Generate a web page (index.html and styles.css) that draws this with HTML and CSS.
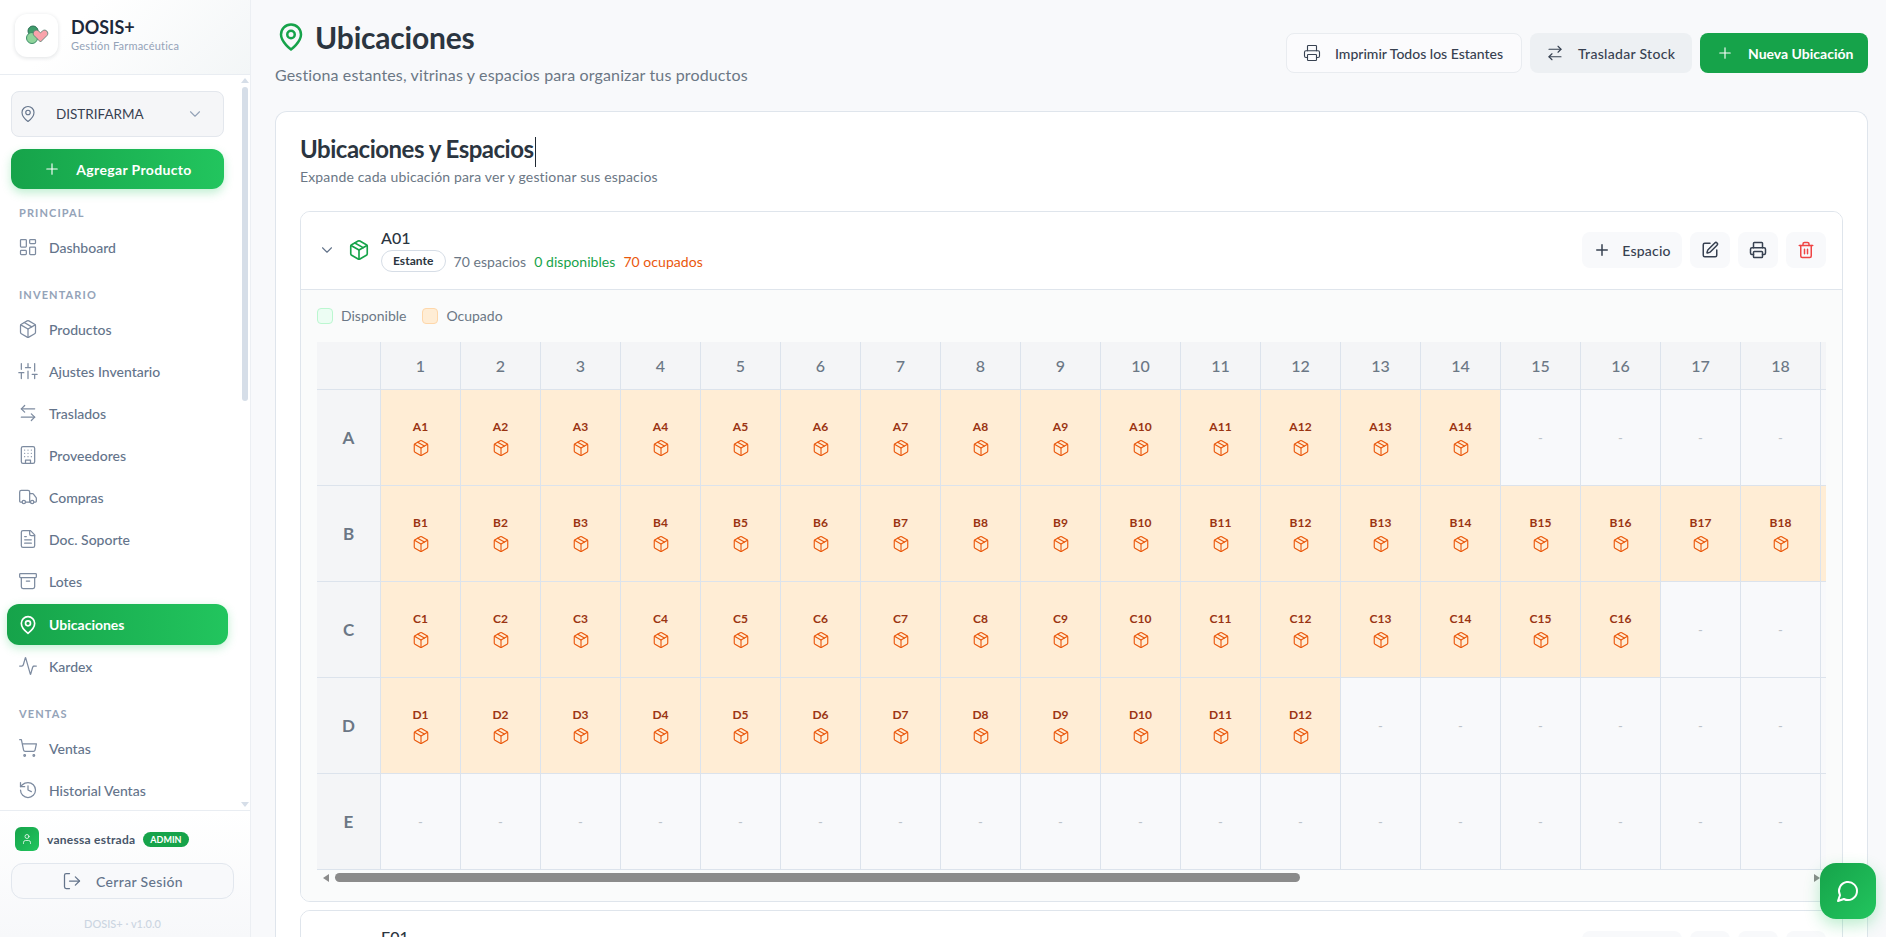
FILE: index.html
```html
<!DOCTYPE html>
<html lang="es">
<head>
  <title>Ubicaciones — DOSIS+</title>
  <meta charset="UTF-8">
  <link rel="stylesheet" href="styles.css">
</head>
<body>
<svg class="sprite" xmlns="http://www.w3.org/2000/svg">
  <symbol id="i-pin" viewBox="0 0 24 24"><path d="M20 10c0 6-8 12-8 12s-8-6-8-12a8 8 0 0 1 16 0Z"/><circle cx="12" cy="10" r="3"/></symbol>
  <symbol id="i-chevron" viewBox="0 0 24 24"><path d="m6 9 6 6 6-6"/></symbol>
  <symbol id="i-plus" viewBox="0 0 24 24"><path d="M5 12h14M12 5v14"/></symbol>
  <symbol id="i-dashboard" viewBox="0 0 24 24"><rect x="3" y="3" width="7" height="9" rx="1"/><rect x="14" y="3" width="7" height="5" rx="1"/><rect x="14" y="12" width="7" height="9" rx="1"/><rect x="3" y="16" width="7" height="5" rx="1"/></symbol>
  <symbol id="i-package" viewBox="0 0 24 24"><path d="m7.5 4.27 9 5.15"/><path d="M21 8a2 2 0 0 0-1-1.73l-7-4a2 2 0 0 0-2 0l-7 4A2 2 0 0 0 3 8v8a2 2 0 0 0 1 1.73l7 4a2 2 0 0 0 2 0l7-4A2 2 0 0 0 21 16Z"/><path d="m3.3 7 8.7 5 8.7-5"/><path d="M12 22V12"/></symbol>
  <symbol id="i-sliders" viewBox="0 0 24 24"><path d="M4 21v-7M4 10V3M12 21v-9M12 8V3M20 21v-5M20 12V3M1 14h6M9 8h6M17 16h6"/></symbol>
  <symbol id="i-left-right" viewBox="0 0 24 24"><path d="M8 3 4 7l4 4"/><path d="M4 7h16"/><path d="m16 21 4-4-4-4"/><path d="M20 17H4"/></symbol>
  <symbol id="i-right-left" viewBox="0 0 24 24"><path d="m16 3 4 4-4 4"/><path d="M20 7H4"/><path d="m8 21-4-4 4-4"/><path d="M4 17h16"/></symbol>
  <symbol id="i-building" viewBox="0 0 24 24"><rect x="4" y="2" width="16" height="20" rx="2"/><path d="M9 22v-4h6v4"/><path d="M8 6h.01M16 6h.01M12 6h.01M12 10h.01M12 14h.01M16 10h.01M16 14h.01M8 10h.01M8 14h.01"/></symbol>
  <symbol id="i-truck" viewBox="0 0 24 24"><path d="M14 18V6a2 2 0 0 0-2-2H4a2 2 0 0 0-2 2v11a1 1 0 0 0 1 1h2"/><path d="M15 18H9"/><path d="M19 18h2a1 1 0 0 0 1-1v-3.65a1 1 0 0 0-.22-.624l-3.48-4.35A1 1 0 0 0 17.52 8H14"/><circle cx="17" cy="18" r="2"/><circle cx="7" cy="18" r="2"/></symbol>
  <symbol id="i-file" viewBox="0 0 24 24"><path d="M15 2H6a2 2 0 0 0-2 2v16a2 2 0 0 0 2 2h12a2 2 0 0 0 2-2V7Z"/><path d="M14 2v4a2 2 0 0 0 2 2h4"/><path d="M10 9H8M16 13H8M16 17H8"/></symbol>
  <symbol id="i-archive" viewBox="0 0 24 24"><rect x="2" y="3" width="20" height="5" rx="1"/><path d="M4 8v11a2 2 0 0 0 2 2h12a2 2 0 0 0 2-2V8"/><path d="M10 12h4"/></symbol>
  <symbol id="i-activity" viewBox="0 0 24 24"><path d="M22 12h-2.48a2 2 0 0 0-1.93 1.46l-2.35 8.36a.25.25 0 0 1-.48 0L9.24 2.18a.25.25 0 0 0-.48 0l-2.35 8.36A2 2 0 0 1 4.49 12H2"/></symbol>
  <symbol id="i-cart" viewBox="0 0 24 24"><circle cx="8" cy="21" r="1"/><circle cx="19" cy="21" r="1"/><path d="M2.05 2.05h2l2.66 12.42a2 2 0 0 0 2 1.58h9.78a2 2 0 0 0 1.95-1.57l1.65-7.43H5.12"/></symbol>
  <symbol id="i-history" viewBox="0 0 24 24"><path d="M3 12a9 9 0 1 0 9-9 9.75 9.75 0 0 0-6.74 2.74L3 8"/><path d="M3 3v5h5"/><path d="M12 7v5l4 2"/></symbol>
  <symbol id="i-user" viewBox="0 0 24 24"><path d="M19 21v-2a4 4 0 0 0-4-4H9a4 4 0 0 0-4 4v2"/><circle cx="12" cy="7" r="4"/></symbol>
  <symbol id="i-logout" viewBox="0 0 24 24"><path d="M9 21H5a2 2 0 0 1-2-2V5a2 2 0 0 1 2-2h4"/><path d="m16 17 5-5-5-5"/><path d="M21 12H9"/></symbol>
  <symbol id="i-printer" viewBox="0 0 24 24"><path d="M6 18H4a2 2 0 0 1-2-2v-5a2 2 0 0 1 2-2h16a2 2 0 0 1 2 2v5a2 2 0 0 1-2 2h-2"/><path d="M6 9V3a1 1 0 0 1 1-1h10a1 1 0 0 1 1 1v6"/><rect x="6" y="14" width="12" height="8" rx="1"/></symbol>
  <symbol id="i-edit" viewBox="0 0 24 24"><path d="M12 3H5a2 2 0 0 0-2 2v14a2 2 0 0 0 2 2h14a2 2 0 0 0 2-2v-7"/><path d="M18.375 2.625a1 1 0 0 1 3 3l-9.013 9.014a2 2 0 0 1-.853.505l-2.873.84a.5.5 0 0 1-.62-.62l.84-2.873a2 2 0 0 1 .506-.852z"/></symbol>
  <symbol id="i-trash" viewBox="0 0 24 24"><path d="M3 6h18"/><path d="M19 6v14c0 1-1 2-2 2H7c-1 0-2-1-2-2V6"/><path d="M8 6V4c0-1 1-2 2-2h4c1 0 2 1 2 2v2"/><path d="M10 11v6M14 11v6"/></symbol>
  <symbol id="i-chat" viewBox="0 0 24 24"><path d="M7.9 20A9 9 0 1 0 4 16.1L2 22Z"/></symbol>
</svg>

<aside class="sidebar">
  <div class="brand">
    <div class="brand-logo">
      <svg width="26" height="26" viewBox="0 0 26 26">
        <circle cx="9" cy="9" r="5" fill="#3f9d6b" stroke="#2d6f55"/>
        <circle cx="8" cy="16" r="5.5" fill="#8fd49a" stroke="#3f8f6b"/>
        <path d="M16.5 20 10 13.5c-2.6-3 1.6-7.2 4.4-4.6l2.1 1.8 2.1-1.8c2.8-2.6 7 1.6 4.4 4.6Z" fill="#f9a3ab" stroke="#4b7a6c" stroke-width=".8"/>
      </svg>
    </div>
    <div>
      <div class="brand-name">DOSIS+</div>
      <div class="brand-sub">Gestión Farmacéutica</div>
    </div>
  </div>

  <nav class="nav">
    <div class="branch">
      <svg class="icon branch-pin"><use href="#i-pin"/></svg>
      <span class="branch-name">DISTRIFARMA</span>
      <svg class="icon branch-chevron"><use href="#i-chevron"/></svg>
    </div>
    <a class="add-product"><svg class="icon"><use href="#i-plus"/></svg>Agregar Producto</a>

    <div class="nav-label first">PRINCIPAL</div>
    <a class="nav-item"><svg class="icon"><use href="#i-dashboard"/></svg>Dashboard</a>

    <div class="nav-label">INVENTARIO</div>
    <a class="nav-item"><svg class="icon"><use href="#i-package"/></svg>Productos</a>
    <a class="nav-item"><svg class="icon"><use href="#i-sliders"/></svg>Ajustes Inventario</a>
    <a class="nav-item"><svg class="icon"><use href="#i-left-right"/></svg>Traslados</a>
    <a class="nav-item"><svg class="icon"><use href="#i-building"/></svg>Proveedores</a>
    <a class="nav-item"><svg class="icon"><use href="#i-truck"/></svg>Compras</a>
    <a class="nav-item"><svg class="icon"><use href="#i-file"/></svg>Doc. Soporte</a>
    <a class="nav-item"><svg class="icon"><use href="#i-archive"/></svg>Lotes</a>
    <a class="nav-item active"><svg class="icon"><use href="#i-pin"/></svg>Ubicaciones</a>
    <a class="nav-item"><svg class="icon"><use href="#i-activity"/></svg>Kardex</a>

    <div class="nav-label">VENTAS</div>
    <a class="nav-item"><svg class="icon"><use href="#i-cart"/></svg>Ventas</a>
    <a class="nav-item"><svg class="icon"><use href="#i-history"/></svg>Historial Ventas</a>

    <div class="side-scroll">
      <i class="arrow arrow-up"></i>
      <i class="side-thumb"></i>
      <i class="arrow arrow-down"></i>
    </div>
  </nav>

  <div class="side-footer">
    <div class="user">
      <span class="avatar"><svg class="icon"><use href="#i-user"/></svg></span>
      <span class="user-name">vanessa estrada</span>
      <span class="role">ADMIN</span>
    </div>
    <a class="logout"><svg class="icon"><use href="#i-logout"/></svg>Cerrar Sesión</a>
    <div class="version">DOSIS+ · v1.0.0</div>
  </div>
</aside>

<main class="main">
  <header class="page-head">
    <div>
      <h1 class="page-title"><svg class="icon"><use href="#i-pin"/></svg>Ubicaciones</h1>
      <p class="page-sub">Gestiona estantes, vitrinas y espacios para organizar tus productos</p>
    </div>
    <div class="page-actions">
      <a class="btn btn-outline"><svg class="icon"><use href="#i-printer"/></svg>Imprimir Todos los Estantes</a>
      <a class="btn btn-grey"><svg class="icon"><use href="#i-right-left"/></svg>Trasladar Stock</a>
      <a class="btn btn-green"><svg class="icon"><use href="#i-plus"/></svg>Nueva Ubicación</a>
    </div>
  </header>

  <section class="card">
    <h2 class="card-title">Ubicaciones y Espacios<span class="caret"></span></h2>
    <p class="card-sub">Expande cada ubicación para ver y gestionar sus espacios</p>

    <div class="shelf">
      <div class="shelf-head">
        <svg class="icon shelf-chevron"><use href="#i-chevron"/></svg>
        <svg class="icon shelf-box"><use href="#i-package"/></svg>
        <div class="shelf-info">
          <div class="shelf-name">A01</div>
          <div class="shelf-meta">
            <span class="tag">Estante</span>
            <span>70 espacios</span>
            <span class="free">0 disponibles</span>
            <span class="taken">70 ocupados</span>
          </div>
        </div>
        <div class="shelf-actions">
          <a class="tool tool-wide"><svg class="icon"><use href="#i-plus"/></svg>Espacio</a>
          <a class="tool"><svg class="icon"><use href="#i-edit"/></svg></a>
          <a class="tool"><svg class="icon"><use href="#i-printer"/></svg></a>
          <a class="tool tool-red"><svg class="icon"><use href="#i-trash"/></svg></a>
        </div>
      </div>
      <div class="shelf-body">
        <div class="legend">
          <span class="legend-item"><i class="swatch swatch-free"></i>Disponible</span>
          <span class="legend-item"><i class="swatch swatch-taken"></i>Ocupado</span>
        </div>
        <div class="grid-scroll">
          <div class="grid" id="grid"></div>
        </div>
        <div class="grid-bar">
          <i class="arrow arrow-left"></i>
          <i class="grid-thumb"></i>
          <i class="arrow arrow-right"></i>
        </div>
      </div>
    </div>

    <div class="shelf">
      <div class="shelf-head">
        <svg class="icon shelf-chevron"><use href="#i-chevron"/></svg>
        <svg class="icon shelf-box"><use href="#i-package"/></svg>
        <div class="shelf-info">
          <div class="shelf-name">E01</div>
          <div class="shelf-meta">
            <span class="tag">Estante</span>
          </div>
        </div>
        <div class="shelf-actions">
          <a class="tool tool-wide"><svg class="icon"><use href="#i-plus"/></svg>Espacio</a>
          <a class="tool"><svg class="icon"><use href="#i-edit"/></svg></a>
          <a class="tool"><svg class="icon"><use href="#i-printer"/></svg></a>
          <a class="tool tool-red"><svg class="icon"><use href="#i-trash"/></svg></a>
        </div>
      </div>
    </div>
  </section>
</main>

<a class="chat"><svg class="icon"><use href="#i-chat"/></svg></a>

<script src="grid.js"></script>
</body>
</html>
```

FILE: styles.css
```css
* {
  box-sizing: border-box;
}

html,
body {
  height: 100%;
}

body {
  margin: 0;
  display: flex;
  overflow: hidden;
  background: #f8f9fb;
  color: #2b3540;
  font-family: "Lato", "Open Sans", sans-serif;
}

.sprite {
  display: none;
}

.icon {
  width: 18px;
  height: 18px;
  flex: none;
  fill: none;
  stroke: currentColor;
  stroke-width: 1.5;
  stroke-linecap: round;
  stroke-linejoin: round;
}

.arrow {
  display: block;
  width: 0;
  height: 0;
  border-style: solid;
  border-color: transparent;
}

/* sidebar */
.sidebar {
  width: 251px;
  flex: none;
  display: flex;
  flex-direction: column;
  background: #fff;
  border-right: 1px solid #eceff3;
}

.brand {
  height: 75px;
  flex: none;
  display: flex;
  align-items: center;
  gap: 13px;
  padding: 0 15px 4px;
  background: linear-gradient(135deg, #fff 30%, #f3f6f7);
  border-bottom: 1px solid #e9edf2;
}

.brand-logo {
  width: 43px;
  height: 43px;
  display: flex;
  align-items: center;
  justify-content: center;
  background: #fff;
  border-radius: 12px;
  box-shadow: 0 1px 4px rgba(30, 41, 59, 0.14);
}

.brand-name {
  font-size: 18px;
  font-weight: 700;
  line-height: 20px;
  color: #1e293b;
}

.brand-sub {
  margin-top: 2px;
  font-size: 11px;
  line-height: 14px;
  letter-spacing: 0.2px;
  color: #94a3b8;
}

.nav {
  position: relative;
  flex: 1;
  min-height: 0;
  overflow: hidden;
  padding: 16px 26px 0 11px;
}

.side-scroll {
  position: absolute;
  top: 0;
  right: 0;
  bottom: 0;
  width: 10px;
  display: flex;
  flex-direction: column;
  align-items: center;
  padding: 3px 0;
}

.side-thumb {
  display: block;
  width: 6px;
  height: 314px;
  margin-top: 4px;
  background: #d6dee8;
  border-radius: 3px;
}

.arrow-up {
  border-width: 0 4px 5px;
  border-bottom-color: #d6dee8;
}

.arrow-down {
  margin-top: auto;
  border-width: 5px 4px 0;
  border-top-color: #d6dee8;
}

.branch {
  height: 46px;
  display: flex;
  align-items: center;
  padding: 0 7px;
  background: #f5f6f8;
  border: 1px solid #e3e7ed;
  border-radius: 8px;
  font-size: 13.5px;
  color: #374151;
}

.branch-pin {
  color: #64748b;
}

.branch-name {
  flex: 1;
  margin-left: 19px;
}

.branch-chevron {
  margin-right: 12px;
  color: #94a3b8;
}

.add-product {
  height: 40px;
  margin-top: 12px;
  display: flex;
  align-items: center;
  justify-content: center;
  gap: 15px;
  color: #fff;
  font-size: 14px;
  font-weight: 700;
  letter-spacing: 0.35px;
  background: linear-gradient(90deg, #16a34a, #22c55e);
  border-radius: 12px;
  box-shadow: 0 4px 10px rgba(34, 197, 94, 0.28);
}

.nav-label {
  margin: 20px 0 6px 8px;
  font-size: 11px;
  font-weight: 700;
  line-height: 14px;
  letter-spacing: 1.1px;
  color: #94a3b8;
}

.nav-label.first {
  margin-top: 17px;
}

.nav-item {
  height: 42px;
  margin: 0 -4px;
  padding: 0 12px 0 11px;
  display: flex;
  align-items: center;
  gap: 11px;
  font-size: 14px;
  font-weight: 500;
  color: #64748b;
  border-radius: 12px;
}

.nav-item .icon {
  width: 20px;
  height: 20px;
  color: #7d8ba0;
}

.nav-item.active {
  height: 41px;
  margin-top: 2px;
  color: #fff;
  font-weight: 700;
  background: linear-gradient(90deg, #16a34a, #22c55e);
  box-shadow: 0 3px 10px rgba(34, 197, 94, 0.28);
}

.nav-item.active .icon {
  color: #fff;
  stroke-width: 2;
}

.side-footer {
  height: 127px;
  flex: none;
  padding: 16px 16px 0 11px;
  background: linear-gradient(180deg, #fff, #f7f8fa);
  border-top: 1px solid #e9edf2;
}

.user {
  display: flex;
  align-items: center;
  padding-left: 4px;
}

.avatar {
  width: 24px;
  height: 24px;
  display: flex;
  align-items: center;
  justify-content: center;
  color: #fff;
  background: linear-gradient(135deg, #16a34a, #22c55e);
  border-radius: 6px;
}

.avatar .icon {
  width: 12px;
  height: 12px;
}

.user-name {
  margin-left: 8px;
  font-size: 12px;
  font-weight: 700;
  letter-spacing: 0.25px;
  color: #475569;
}

.role {
  margin-left: 8px;
  padding: 0 7px;
  height: 15px;
  line-height: 15px;
  font-size: 9px;
  font-weight: 700;
  color: #fff;
  background: #16a34a;
  border-radius: 8px;
}

.logout {
  height: 36px;
  margin-top: 12px;
  display: flex;
  align-items: center;
  justify-content: center;
  gap: 14px;
  font-size: 14px;
  font-weight: 500;
  letter-spacing: 0.35px;
  color: #64748b;
  background: #f8f9fb;
  border: 1px solid #e2e7ee;
  border-radius: 12px;
}

.logout .icon {
  width: 20px;
  height: 20px;
}

.version {
  margin-top: 18px;
  text-align: center;
  font-size: 11px;
  font-weight: 500;
  color: #cbd5e1;
}

/* main */
.main {
  flex: 1;
  min-width: 0;
  height: 100%;
  overflow: hidden;
  padding: 0 18px 0 24px;
}

.page-head {
  height: 111px;
  display: flex;
  justify-content: space-between;
  align-items: flex-start;
  padding-top: 19px;
}

.page-title {
  margin: 0;
  display: flex;
  align-items: center;
  gap: 9px;
  font-size: 30px;
  font-weight: 700;
  line-height: 36px;
  letter-spacing: -0.2px;
  color: #2b3540;
}

.page-title .icon {
  width: 30px;
  height: 30px;
  margin-left: 1px;
  color: #16a34a;
  stroke-width: 2;
}

.page-sub {
  margin: 8px 0 0;
  font-size: 16px;
  line-height: 24px;
  letter-spacing: 0.14px;
  color: #6b7785;
}

.page-actions {
  display: flex;
  gap: 8px;
  margin-top: 14px;
}

.btn {
  height: 40px;
  display: flex;
  align-items: center;
  gap: 14px;
  padding: 0 16px;
  font-size: 14px;
  font-weight: 500;
  white-space: nowrap;
  border-radius: 8px;
  color: #374151;
}

.btn-outline {
  width: 236px;
  background: #fbfbfd;
  border: 1px solid #e9ecf0;
}

.btn-grey {
  width: 162px;
  letter-spacing: 0.3px;
  background: #edf0f3;
}

.btn-green {
  width: 168px;
  background: #16a34a;
  color: #fff;
  font-weight: 700;
}

.card {
  background: #fff;
  border: 1px solid #dfe5ec;
  border-bottom: 0;
  border-radius: 12px 12px 0 0;
  padding: 21px 24px 24px;
}

.card-title {
  margin: 0;
  font-size: 24px;
  font-weight: 700;
  line-height: 32px;
  letter-spacing: -0.5px;
  color: #2b3540;
}

.caret {
  display: inline-block;
  width: 1px;
  height: 30px;
  margin-left: 1px;
  vertical-align: middle;
  background: #1f2933;
}

.card-sub {
  margin: 0 0 24px;
  font-size: 14px;
  line-height: 20px;
  letter-spacing: 0.15px;
  color: #6b7785;
}

.shelf {
  margin-bottom: 8px;
  border: 1px solid #dfe5ec;
  border-radius: 10px;
  overflow: hidden;
}

.shelf-head {
  height: 77px;
  display: flex;
  align-items: center;
  padding: 0 16px 0 17px;
  background: #fff;
}

.shelf-chevron {
  color: #64748b;
}

.shelf-box {
  width: 22px;
  height: 22px;
  margin-left: 12px;
  color: #16a34a;
  stroke-width: 1.8;
}

.shelf-info {
  flex: 1;
  margin-left: 11px;
}

.shelf-name {
  font-size: 16px;
  font-weight: 500;
  line-height: 20px;
}

.shelf-meta {
  margin-top: 2px;
  display: flex;
  align-items: center;
  gap: 8px;
  font-size: 14px;
  letter-spacing: 0.05px;
  color: #6b7785;
}

.tag {
  height: 22px;
  padding: 0 11px;
  line-height: 20px;
  font-size: 12px;
  font-weight: 700;
  color: #2b3540;
  border: 1px solid #d6dde6;
  border-radius: 11px;
}

.free {
  color: #16a34a;
}

.taken {
  color: #ea580c;
}

.shelf-actions {
  display: flex;
  gap: 8px;
}

.tool {
  width: 40px;
  height: 36px;
  display: flex;
  align-items: center;
  justify-content: center;
  gap: 11px;
  font-size: 14px;
  font-weight: 500;
  letter-spacing: 0.2px;
  color: #374151;
  background: #f8f9fb;
  border-radius: 8px;
}

.tool .icon {
  stroke-width: 2;
}

.tool-wide {
  width: 100px;
}

.tool-red {
  color: #ef4444;
}

.shelf-body {
  padding: 16px 16px 15px;
  background: #fafbfb;
  border-top: 1px solid #dfe5ec;
}

.legend {
  display: flex;
  gap: 16px;
  margin-bottom: 16px;
  font-size: 14px;
  line-height: 20px;
  color: #6b7785;
}

.legend-item {
  display: flex;
  align-items: center;
  gap: 8px;
}

.swatch {
  width: 16px;
  height: 16px;
  border-radius: 4px;
}

.swatch-free {
  background: #ecfdf3;
  border: 1px solid #bbf7d0;
}

.swatch-taken {
  background: #ffedd5;
  border: 1px solid #fed7aa;
}

.grid-scroll {
  overflow: hidden;
}

.grid {
  display: grid;
  grid-template-columns: 64px repeat(28, 80px);
  grid-template-rows: 48px repeat(5, 96px);
  width: max-content;
}

/* screenshots hide native bars, so this one is drawn in flow under the grid */
.grid-bar {
  height: 16px;
  display: flex;
  align-items: center;
  padding: 0 6px;
}

.grid-thumb {
  display: block;
  width: 965px;
  height: 9px;
  margin-left: 6px;
  background: #8b8b8b;
  border-radius: 5px;
}

.arrow-left {
  border-width: 4px 6px 4px 0;
  border-right-color: #8b8b8b;
}

.arrow-right {
  margin-left: auto;
  border-width: 4px 0 4px 6px;
  border-left-color: #8b8b8b;
}

.cell {
  display: flex;
  flex-direction: column;
  align-items: center;
  justify-content: center;
  gap: 5px;
  border-right: 1px solid #dce3ec;
  border-bottom: 1px solid #dce3ec;
}

.cell-head {
  background: #f4f5f7;
  font-size: 16px;
  font-weight: 500;
  color: #6b7785;
}

.cell-row {
  background: #f4f5f7;
  font-size: 17px;
  font-weight: 700;
  color: #6b7785;
}

.cell-empty {
  padding-top: 2px;
  background: #f8f9fb;
  font-size: 13px;
  color: #bcc2ca;
}

.cell-taken {
  padding-top: 2px;
  background: #ffedd5;
  font-size: 12px;
  font-weight: 700;
  color: #9a3412;
}

.cell-taken .icon {
  color: #ea580c;
}

.chat {
  position: fixed;
  right: 10px;
  bottom: 18px;
  width: 56px;
  height: 56px;
  display: flex;
  align-items: center;
  justify-content: center;
  color: #fff;
  background: linear-gradient(135deg, #16a34a, #22c55e);
  border-radius: 16px;
  box-shadow: 0 6px 16px rgba(34, 197, 94, 0.3);
}

.chat .icon {
  width: 24px;
  height: 24px;
  stroke-width: 2;
}
```

FILE: grid.js
```js
const grid = document.getElementById("grid");
// how many spaces are taken on each row of the shelf
const rows = { A: 14, B: 28, C: 16, D: 12, E: 0 };
const cols = 28;

let html = '<div class="cell cell-head"></div>';
for (let c = 1; c <= cols; c++) {
  html += `<div class="cell cell-head">${c}</div>`;
}

Object.keys(rows).forEach((row) => {
  html += `<div class="cell cell-row">${row}</div>`;
  for (let c = 1; c <= cols; c++) {
    if (c <= rows[row]) {
      html += `<div class="cell cell-taken">${row}${c}<svg class="icon"><use href="#i-package"/></svg></div>`;
    } else {
      html += '<div class="cell cell-empty">-</div>';
    }
  }
});

grid.innerHTML = html;
```
